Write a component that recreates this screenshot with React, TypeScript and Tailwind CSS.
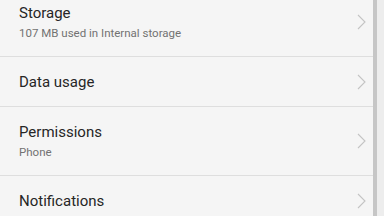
const rows = [
  { title: 'Storage', sub: '107 MB used in Internal storage' },
  { title: 'Data usage' },
  { title: 'Permissions', sub: 'Phone' },
  { title: 'Notifications' },
];

function Chevron() {
  return (
    <svg width="9" height="16" viewBox="0 0 9 16" className="shrink-0">
      <path d="M1 1 L8 8 L1 15" fill="none" stroke="#c4c4c4" strokeWidth="1.1" />
    </svg>
  );
}

export default function App() {
  return (
    <div className="w-[384px] h-[216px] overflow-hidden bg-[#f5f5f5] flex font-['Roboto',sans-serif]">
      <div className="flex-1 -mt-[12px] flex flex-col">
        {rows.map((r, i) => (
          <div
            key={r.title}
            className={`shrink-0 flex items-center pl-[19px] pr-[7px] border-b border-[#dedede] ${r.sub ? 'h-[69px]' : 'h-[50px]'} ${i === 3 ? 'border-b-0' : ''}`}
          >
            <div className="flex-1 flex flex-col">
              <span className="text-[15px] leading-[20px] text-[#262626]">{r.title}</span>
              {r.sub && <span className="text-[11.5px] leading-[16px] mt-[2px] text-[#727272]">{r.sub}</span>}
            </div>
            <Chevron />
          </div>
        ))}
      </div>
      <div className="w-[4px] bg-[#c6c6c6]" />
      <div className="w-[7px] bg-[#ededed]" />
    </div>
  );
}
